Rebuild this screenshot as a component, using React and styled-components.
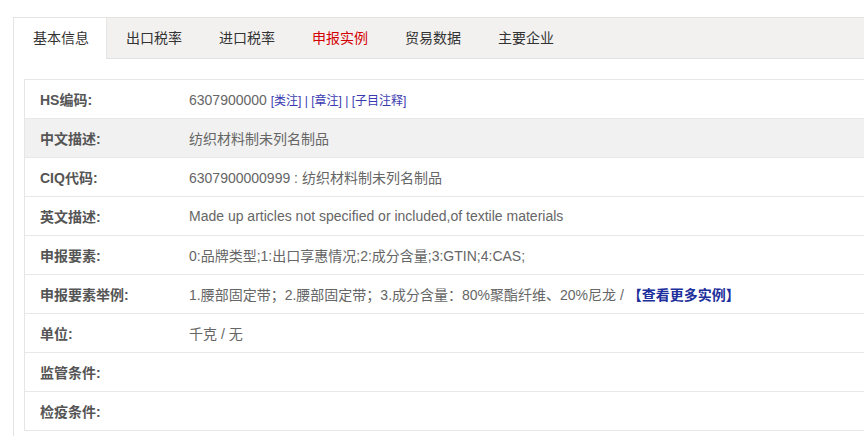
import React from "react";
import styled, {createGlobalStyle} from "styled-components";

const GlobalStyle = createGlobalStyle`
   html, body {
      margin: 0;
      padding: 0;
      background: #fff;
   }
   body {
      font-family: "Liberation Sans", "Noto Sans CJK SC", sans-serif;
      font-size: 14px;
   }
`;

const Page = styled.div`
   padding: 17px 0 0 13px;
`;

// right edge of the panel is cut off in the shot, so no right border
const Frame = styled.div`
   min-height: 418px;
   border-top: 1px solid #e4e4e4;
   border-left: 1px solid #e4e4e4;
`;

const TabBar = styled.div`
   display: flex;
   height: 40px;
   background: #f2f1f0;
   border-bottom: 1px solid #e2e2e2;
`;

const Tab = styled.div`
   padding: 0 17px 0 19px;
   height: ${p => (p.active ? "41px" : "40px")};
   line-height: 40px;
   background: ${p => (p.active ? "#fff" : "transparent")};
   color: ${p => (p.hot ? "#d40000" : "#333")};
   border-right: 1px solid ${p => (p.active ? "#e6e6e6" : "transparent")};
   cursor: pointer;
`;

const Content = styled.div`
   padding: 20px 0 0 10px;
`;

const Table = styled.div`
   border: 1px solid #e6e6e6;
   border-right: none;
`;

const Row = styled.div`
   display: grid;
   grid-template-columns: 149px 1fr;
   align-items: center;
   height: 38px;
   padding-left: 15px;
   background: ${p => (p.shade ? "#f1f1f1" : "#fff")};
   border-bottom: 1px solid #e8e8e8;
   &:last-child {
      border-bottom: none;
   }
`;

const Label = styled.div`
   font-weight: bold;
   color: #555;
`;

const Value = styled.div`
   color: #666;
   white-space: nowrap;
`;

const Note = styled.span`
   font-size: 12px;
   color: #3b3bb0;
`;

const More = styled.span`
   font-weight: bold;
   color: #1d2f9c;
`;

const tabs = ["基本信息", "出口税率", "进口税率", "申报实例", "贸易数据", "主要企业"];

const rows = [
   {
      label: "HS编码:",
      value: (
         <>
            6307900000 <Note>[类注] | [章注] | [子目注释]</Note>
         </>
      ),
   },
   {label: "中文描述:", value: "纺织材料制未列名制品", shade: true},
   {label: "CIQ代码:", value: "6307900000999 : 纺织材料制未列名制品"},
   {
      label: "英文描述:",
      value: "Made up articles not specified or included,of textile materials",
   },
   {label: "申报要素:", value: "0:品牌类型;1:出口享惠情况;2:成分含量;3:GTIN;4:CAS;"},
   {
      label: "申报要素举例:",
      value: (
         <>
            1.腰部固定带；2.腰部固定带；3.成分含量：80%聚酯纤维、20%尼龙 /{" "}
            <More>【查看更多实例】</More>
         </>
      ),
   },
   {label: "单位:", value: "千克 / 无"},
   {label: "监管条件:", value: ""},
   {label: "检疫条件:", value: ""},
];

export default function App() {
   return (
      <Page>
         <GlobalStyle />
         <Frame>
            <TabBar>
               {tabs.map((t, i) => (
                  <Tab key={t} active={i === 0} hot={t === "申报实例"}>
                     {t}
                  </Tab>
               ))}
            </TabBar>
            <Content>
               <Table>
                  {rows.map(r => (
                     <Row key={r.label} shade={r.shade}>
                        <Label>{r.label}</Label>
                        <Value>{r.value}</Value>
                     </Row>
                  ))}
               </Table>
            </Content>
         </Frame>
      </Page>
   );
}
